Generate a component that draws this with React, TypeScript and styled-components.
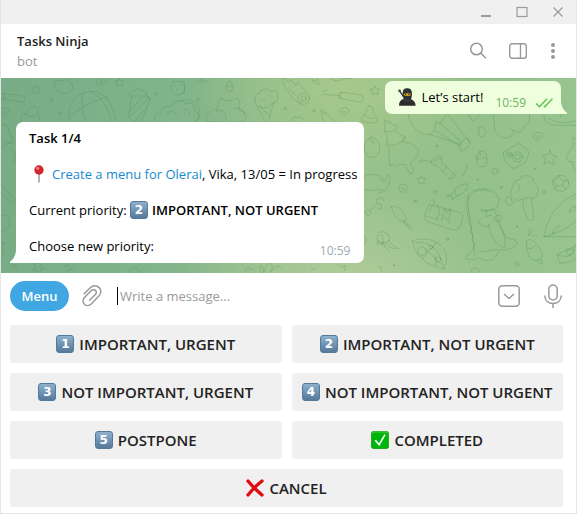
import React from "react";
import styled, { createGlobalStyle } from "styled-components";

const GlobalStyle = createGlobalStyle`
  * { box-sizing: border-box; }
  body {
    margin: 0;
    background: #fff;
    color: #000;
    font: 13px/18px "Open Sans", "Noto Sans", sans-serif;
  }
  button, input { font: inherit; }
`;

const Window = styled.div`
  min-height: 100vh;
  display: flex;
  flex-direction: column;
  border: 1px solid #e3e4e4;
  border-top: 0;
  background: #fff;
`;

const TitleBar = styled.div`
  height: 24px;
  display: flex;
  justify-content: flex-end;
  background: #f0f0f0;
`;

const WindowButton = styled.button`
  width: 36px;
  height: 24px;
  padding: 0;
  border: 0;
  background: none;
  color: #9b9b9b;
  display: grid;
  place-items: center;
`;

const Header = styled.header`
  height: 54px;
  padding: 0 16px;
  display: flex;
  align-items: center;
  justify-content: space-between;
`;

const ChatName = styled.h1`
  margin: 0;
  font-size: 13px;
  line-height: 20px;
  font-weight: 600;
  color: #222;
`;

const ChatStatus = styled.p`
  margin: 0;
  line-height: 20px;
  color: #999;
`;

const HeaderActions = styled.div`
  display: flex;
  gap: 16px;
`;

const IconButton = styled.button<{ $width?: number }>`
  width: ${({ $width = 24 }) => $width}px;
  height: 24px;
  padding: 0;
  border: 0;
  background: none;
  color: #999;
  display: grid;
  place-items: center;
  flex: none;
`;

const Chat = styled.main`
  position: relative;
  flex: 1;
  min-height: 195px;
  padding: 3px 15px 10px;
  display: flex;
  flex-direction: column;
  gap: 8px;
  overflow: hidden;
  background:
    radial-gradient(ellipse at 60% 6%, #a6c88c 0, rgba(166, 200, 140, 0) 30%),
    radial-gradient(ellipse at 60% 105%, #aecb98 0, rgba(174, 203, 152, 0) 34%),
    linear-gradient(95deg, #78ac86 0%, #82b48a 30%, #99c28c 60%, #93c08b 80%, #98c490 100%);
`;

const Wallpaper = styled.svg`
  position: absolute;
  inset: 0;
  width: 100%;
  height: 100%;
  fill: none;
  stroke: #3f7a4b;
  stroke-opacity: 0.24;
  stroke-width: 3;
  stroke-linecap: round;
  stroke-linejoin: round;
`;

const Bubble = styled.article<{ $own?: boolean }>`
  position: relative;
  align-self: ${({ $own }) => ($own ? "flex-end" : "flex-start")};
  padding: ${({ $own }) => ($own ? "7px 8px 8px 13px" : "7px 7px 8px 13px")};
  border-radius: ${({ $own }) => ($own ? "7px 7px 0 7px" : "7px 7px 7px 0")};
  background: ${({ $own }) => ($own ? "#effedd" : "#fff")};
  display: flex;
  align-items: center;
`;

const Tail = styled.svg<{ $own?: boolean }>`
  position: absolute;
  bottom: 0;
  ${({ $own }) => ($own ? "left: 100%;" : "right: 100%; transform: scaleX(-1);")}
  fill: ${({ $own }) => ($own ? "#effedd" : "#fff")};
`;

const MessageText = styled.p`
  margin: 0 0 18px;
  &:last-of-type { margin-bottom: 0; }
`;

const MessageBody = styled.div``;

const Strong = styled.strong`
  font-weight: 600;
`;

const TaskLink = styled.a`
  color: #168acd;
  text-decoration: none;
`;

const Time = styled.time`
  font-size: 12px;
  line-height: 12px;
  color: #a0acb6;
  position: absolute;
  right: 14px;
  bottom: 6px;
`;

const OwnMeta = styled.span`
  align-self: flex-end;
  margin: 0 0 -3px 12px;
  display: flex;
  align-items: center;
  gap: 9px;
  color: #6cb465;
  font-size: 12px;
  line-height: 12px;
`;

const EmojiSvg = styled.svg`
  width: 18px;
  height: 18px;
  margin-right: 5px;
  flex: none;
  vertical-align: -4px;
`;

const Keycap = styled.span<{ $inline?: boolean }>`
  width: 18px;
  height: 18px;
  margin-right: ${({ $inline }) => ($inline ? 4 : 5)}px;
  display: inline-grid;
  place-items: center;
  flex: none;
  vertical-align: bottom;
  border: 1px solid #55799a;
  border-radius: 3px;
  background: linear-gradient(#8db0cd, #55799b);
  color: #fff;
  font: 700 12px/16px "DejaVu Sans", sans-serif;
`;

const Composer = styled.form`
  height: 52px;
  padding: 0 11px 6px 9px;
  display: flex;
  align-items: center;
`;

const MenuButton = styled.button`
  width: 59px;
  height: 30px;
  padding: 0;
  border: 0;
  border-radius: 15px;
  background: #40a7e3;
  color: #fff;
  font-weight: 600;
  flex: none;
`;

const Attach = styled(IconButton)`
  margin: 0 13px 0 11px;
`;

const Caret = styled.span`
  width: 1px;
  height: 18px;
  background: #000;
  flex: none;
  margin-right: 2px;
`;

const MessageInput = styled.input`
  flex: 1;
  min-width: 0;
  padding: 0;
  border: 0;
  outline: 0;
  background: none;
  color: #000;
  &::placeholder { color: #999; opacity: 1; }
`;

const ComposerActions = styled.div`
  display: flex;
  gap: 20px;
`;

const Keyboard = styled.div`
  padding: 0 13px 6px 9px;
  display: grid;
  grid-template-columns: 1fr 1fr;
  gap: 10px;
`;

const KeyButton = styled.button<{ $wide?: boolean }>`
  height: 38px;
  padding: 0;
  border: 0;
  border-radius: 3px;
  background: #f0f0f0;
  color: #222;
  font-size: 15px;
  font-weight: 600;
  white-space: nowrap;
  display: flex;
  align-items: center;
  justify-content: center;
  ${({ $wide }) => $wide && "grid-column: 1 / -1;"}
`;

const NinjaEmoji = () => (
  <EmojiSvg viewBox="0 0 54 54" aria-label="Ninja" role="img">
    <path d="M2 5l16 23" stroke="#333638" strokeWidth="4" />
    <path d="M1 12l8-6" stroke="#333638" strokeWidth="3" />
    <path d="M3 53c0-12 5-18 14-21h18c11 3 17 9 18 21z" fill="#2b2d2f" />
    <path d="M14 16C14 5 19 1 28 1s14 5 14 16c0 9-2 15-5 19H19c-3-5-5-11-5-20z" fill="#303335" />
    <path d="M18 17q10-3 20 0v5q-10 3-20 0z" fill="#f0b51d" />
    <path d="M21 19h4m6 0h4" stroke="#1f2020" strokeWidth="3" />
    <path d="M15 35q13 8 26 0" stroke="#4b4e50" strokeWidth="2" fill="none" />
  </EmojiSvg>
);

const PinEmoji = () => (
  <EmojiSvg viewBox="0 0 54 54" aria-label="Pin" role="img">
    <path d="M30 24v27" stroke="#8b8e92" strokeWidth="4" strokeLinecap="round" />
    <circle cx="30" cy="15" r="14" fill="#d3262c" />
    <circle cx="26" cy="10" r="5" fill="#f47772" />
  </EmojiSvg>
);

const CheckEmoji = () => (
  <EmojiSvg viewBox="0 0 54 54" aria-hidden="true">
    <rect x="1" y="1" width="52" height="52" rx="8" fill="#00b50a" stroke="#078e10" strokeWidth="2" />
    <path d="M4 8q0-5 5-5h36q5 0 5 5" stroke="#6ddc68" strokeWidth="2" fill="none" />
    <path d="M11 29l4-3 9 11L40 10l4 2-19 33z" fill="#fff" />
  </EmojiSvg>
);

const CrossEmoji = () => (
  <EmojiSvg viewBox="0 0 54 54" aria-hidden="true">
    <path d="M6 6q14 18 42 42M48 6Q27 22 6 48" stroke="#e30b12" strokeWidth="10" strokeLinecap="round" fill="none" />
  </EmojiSvg>
);

const BubbleTail = ({ own }: { own?: boolean }) => (
  <Tail $own={own} width="6" height="12" viewBox="0 0 6 12" aria-hidden="true">
    <path d="M0 0v12h6q1-1-1-2Q1 7 0 0z" />
  </Tail>
);

const STAR = "M0-13l4 8 10 1-7 7 2 10-9-5-8 5 1-10-8-7 10-1z";
const SWIRL = "M0 3c-6 0-4-8 2-7 9 2 7 14-2 14-14 0-17-20-3-24 12-3 20 5 18 15";
const EGG = "M0-18c5 0 11 12 10 20S5 14 0 14-11 10-10 2-5-18 0-18z";

type Spot = [number, number];

const Scatter = ({ d, spots }: { d: string; spots: Spot[] }) => (
  <>
    {spots.map(([x, y]) => (
      <path key={`${x}-${y}`} d={d} transform={`translate(${x} ${y})`} />
    ))}
  </>
);

const Doodles = () => (
  <Wallpaper viewBox="0 0 577 195" preserveAspectRatio="xMinYMin slice" aria-hidden="true">
    <g transform="translate(0 -78) scale(.33333)">
      <path d="M162 247c8-12 20-2 26-6 14-6 28 6 26 22-2 14-14 18-28 17-16-2-30-17-24-33z" />
      <path d="M3 279l62 9q8 2 6 10-1 9-9 8L2 297M8 279v18" />
      <path d="M205 364c-10-52 22-88 66-90 40 2 66 34 72 90M246 280c-8 30 0 60 10 84M322 292c-40 6-86 32-114 56M270 275c36 20 56 56 60 89" />
      <path d="M382 350l10-62h46l10 10-28 68h-20zM388 332l36-40M388 350l54-54M404 362l32-38M390 288c-10-10 2-18 10-14 2-10 20-10 22-2 10-2 18 6 14 16 8 0 12 6 10 12" />
      <path d="M514 248c8-8 14-2 20-4 14 0 22 14 16 28-6 12-18 16-28 10-12-8-16-20-8-34M522 256v1M536 254v1M526 268q8 2 10-5" />
      <path d="M462 364c-6-14 4-28 18-24-2-16 14-26 28-18 4-18 34-26 46-12 18-6 34 10 26 24 16 2 16 22 6 30M498 340c12-10 24-6 28 6M546 330c14-6 22 6 20 14" />
      <path d="M60 364c-4-16 6-22 14-22 2-14 16-24 26-22 12 4 12 14 10 22 8 4 6 16 0 22M72 344q20 12 38-2" />
      <Scatter d={STAR} spots={[[104, 268], [355, 247]]} />
      <Scatter d={SWIRL} spots={[[298, 247], [10, 338]]} />
      <path d="M150 297l6 2-2 6-5-1zM116 320v4M176 336l6 2-2 6-5-1zM464 278l6 2-2 6-5-1z" />
    </g>
    <g transform="translate(0 32) scale(.33333)">
      <path d="M0 42c14 0 26 10 24 24-2 8 12 10 10 24-4 10-16 10-20 4M26 116c10 0 20 12 16 22M4 112q22-20 36-12M40 138v20q-4 8-8 0" />
      <path d="M-4 222l44 46q6 10-4 12L-6 242M0 316c18-6 30 8 26 26q-4 18-24 22M6 398v40M4 402q6-14 10 0" />
    </g>
    <g transform="translate(180 -8) scale(.33333)">
      <path d="M0 32q12 2 10 12v26H0M0 92c40-12 60 16 54 40 4 10-4 18-10 20M48 36l12-8 4 12 8-10 4 8 10-10" />
      <Scatter d={EGG} spots={[[145, 51]]} />
      <path d="M134 50l6-4 6 5 8-6" />
      <path d="M114 92l6-8 14 8h22l14-8 6 10-2 26q12 2 20 10 6 14-8 26H80c-12-14 0-34 28-38zM106 124c20-12 34 6 28 28M160 116c14-6 28 4 30 18" />
      <path d="M222 92c-6-14 6-22 14-20 0-18 30-18 34-6 12-10 24 4 20 14 2 12-6 20-18 20-4 12-24 20-36 8-10 2-14-8-14-16zM228 108l24 46M278 98l-16 56M238 112l28 24M264 74l6 6M242 90l8 4" />
      <circle cx="368" cy="86" r="17" />
      <circle cx="368" cy="86" r="8" />
      <path d="M304 24c0 20 12 26 10 34q14 10 18 26 12 8 26 18M310 24l14 12 6-8 14 20 6-12 30 34M324 58l24 20" />
      <path d="M392 26q6 14 20 16M396 34l16-6 2 14M452 26q18 14 34 0 16-2 28 0" />
      <path d="M482 67l60 8q10 12 0 22l-66-12q-8-10 6-18zM480 68q-10 10 2 17M470 76l-14-2-12 4q-4-6-16-6M426 64l12-4" />
      <Scatter d={STAR} spots={[[582, 62]]} />
      <Scatter d={SWIRL} spots={[[488, 127]]} />
      <path d="M418 120l10 36M420 118q20 14 44 38M426 128l8 4M566 108c8 0 12 8 12 22l10 12q4 12-6 16-20 4-38-4-6-10 2-16l10-12c0-10 4-18 10-18zM550 136q18 14 34 8M330 152q2-12 16-10 20-4 24 10" />
      <path d="M50 86l5 2-2 6-5-2zM312 112l5 2-2 6-5-2zM398 118l5 2-2 6-5-2z" />
    </g>
    <g transform="translate(180 32) scale(.33333)">
      <Scatter d="M0-30c14 0 26 18 24 38-2 16-14 24-24 22-14 0-24-14-22-30C-20-16-12-30 0-30z" spots={[[572, 112]]} />
      <path d="M562 90c10-6 18 4 14 14M546 214c0-18 20-26 36-18 14-4 26 6 26 16M546 240h60M550 308c4-12 14-8 16-4l22-24c-6-8 2-18 8-12 2-10 16-4 12 4M550 308c8-2 10 4 8 10 8 0 12-8 10-12M542 376h10q6 14 0 28h-10M590 376q14-6 16 8v18h-16z" />
      <path d="M194 484c0-14 12-14 14-4 12-6 14 2 10 8M240 488c-8-12-4-22 2-20q8 8 6 20 14-40 24-24 6 6-6 24 24-32 34-14M470 464l12 8 12-6-4 16M390 478h12" />
    </g>
    <g transform="translate(377 32) scale(.33333)">
      <path d="M20 31c10 8 16 2 24 14l14 2q0 10-8 14 16 14 32 20-2 10-10 14l24 4q10 8 24 16c4 20-8 38-24 44l10 22q0 14-12 8l-14-26q-18-2-24 6-10-10-20 0-6-22-2-56-14-8-8-12 4-16 0-30-10-2-4-40zM28 101q26 18 54-20M20 64q20 4 30-4" />
      <path d="M90 10c6 42 32 66 66 64l94 30M208 10l68 88M156 74l14-14 4-26 12 6 22-30M170 60l76 48M186 40l66 58M242 106q14-16 26-24l10 20q-12 14-26 22zM270 10l16 26 22-26" />
      <path d="M348 12c-6 18 2 20 2 28-6 28 14 46 38 44 14-4 20-16 20-22 16 12 30 0 28-14 14-2 22-16 18-36M408 62q-12-2-14-10M498 10c-2 20 8 34 36 36h62M510 24q34 24 86 8M548 10v12" />
      <path d="M300 54q6 12 2 24 10 8 20-4 6-12-4-20-8-10-18 0zM376 128l46-28 28 20 2 12-8 24-36 20-24-18q-8-14-8-30z" />
      <circle cx="419" cy="141" r="15" /><circle cx="419" cy="141" r="8" /><circle cx="394" cy="135" r="9" /><circle cx="394" cy="135" r="4" />
      <path d="M160 158c0-16 24-24 32-16l-2 16 42 38q-2 10-16 12l-40-42q-14 2-16-8zM168 158q6-14 24-12M192 184l16-16M214 206l16-16M266 162q4 20-16 40M132 150l26 4" />
      <path d="M296 144c0-28 28-26 30-4 2 24-6 30-14 30-14 0-18-12-16-26zM296 144l8 6 8-8 14 6M306 122v16" />
      <Scatter d={STAR} spots={[[130, 210]]} />
      <path d="M516 120l6 16 15 2-12 10 2 17-14-10-16 8 5-16-9-12 17-2z" />
      <Scatter d={SWIRL} spots={[[75, 237], [479, 82]]} />
      <path d="M0 250c28-4 40-28 32-58-12 12-6 22-16 26L0 202M600 90q-22-14-14 0v20q-30 30-16 44l14 2q0 22 16 30" />
      <path d="M224 250c4-14 24-30 46-28-2 20-16 30-34 36l-12 12-2-10-14-2zM262 238v1M236 258q-8-10-6-18" />
      <path d="M40 290c20-4 34 10 40 26 8 12 4 18-2 18-20-4-32-18-38-44zM76 334l28 28M80 330l20 20M70 330l24 26M0 368c24-10 38 8 34 24-6 10-20 6-34 2M12 396l22 30M20 396q20 24 32 20M30 390q16 24 36 26M0 390l20 22" />
      <path d="M154 284l92 24q10 6 8 18l-10 28q-8 8-20 6l-74-24q-16-8-10-20l8-22q2-12 6-10zM158 270q14-6 12 12M178 284q10 16 6 28l-12 22M142 318l40 10M200 296l-10 36 12-10 10 16 6-44-10 12zM154 304l10-20" />
      <path d="M104 392c44-16 104 6 102 56l-8 30-38-14q-18-6-28-20-26-16-28-52zM112 398q72-8 84 78M176 396l-42 50M142 416l46 46M170 436l6 32" />
      <circle cx="132" cy="424" r="13" /><circle cx="158" cy="412" r="6" /><circle cx="180" cy="448" r="8" />
      <path d="M272 300c-6-32 2-54 26-58 30-8 60 2 64 26 2 14-4 26-14 32 14 24 22 62 36 82 12 8 26 2 34 16-8 22-34 20-54 22-10 20-18 32-30 30-14 4-22-2-30-8-6 8-38 10-40 0 0-12 22-14 24-24-2-38-12-84-16-118zM308 298q22 10 40-4M310 303q20 2 36-4M346 260v1M322 270v2M326 306l-2 14 16-4M300 330c4 20 28 24 38 12M348 324c10-14 26-8 22 2-6 12-20 6-22-2zM332 344c4 36 24 64 48 68 8-34-16-70-28-82M304 426q28-4 56-8" />
      <path d="M274 250l-6 10 2 8-6 8 4 10-4 10 6 10-2 12 6 10-2 12 8 10-2 14 6 12-2 14 8 12-4 14 6 12-6 10M284 244l6-6 6 4 8-6 6 4 10-6 10 6" />
      <path d="M402 266q-8-20 2-34-2-20 22-24 4-14 24-10 16-2 16 18 18 14 14 30-4 22-20 18l8 60q-4 14-20 4-14-30-14-62-10 10-20 2-8 14-18 18-20-4-10-24 12-4 16 10" />
      <path d="M434 268q16-8 26-4M414 218q18 8 6 28" />
      <circle cx="548" cy="220" r="24" />
      <path d="M526 212l16-10 16 10-4 14-18 2zM542 202v-6M558 212h12M554 226l8 12M536 228l-6 10M498 380c6-60 54-118 104-130M498 380h104M498 380q70-14 104-58M524 370q-6-14 20-24-4 16-20 24zM574 306q0-14 18-18 4 14-18 18zM582 270l10-10" />
      <path d="M446 396c4-16 24-4 38 18 14 18 8 30 2 34-18 8-26 2-34-14-6-14-8-24-6-38zM452 416q14 2 20-10M476 450l8 10q10 4 8-4l-4-10M452 376c-6-14 10-26 8-14q2 10-8 14zM464 376h10M538 434l72-34M538 434l8 26q34-2 60-22M540 436q28 8 46-4l4-28M568 428c-8-14 4-16 8-6 6-10 16-4 8 6l-10 8zM280 488q-2-14 12-14 10 0 12 14M0 470l10 2-2 12M0 280q14 4 12 12-4 6-12 4" />
      <circle cx="351" cy="184" r="9" /><circle cx="171" cy="246" r="5" /><circle cx="498" cy="246" r="5" /><circle cx="416" cy="463" r="6" /><circle cx="208" cy="387" r="4" /><circle cx="370" cy="232" r="3" /><circle cx="112" cy="273" r="3" /><circle cx="176" cy="108" r="3" /><circle cx="126" cy="155" r="2" /><circle cx="470" cy="177" r="2" /><circle cx="299" cy="209" r="2" /><circle cx="417" cy="350" r="2" /><circle cx="48" cy="466" r="2" />
    </g>
    <g transform="translate(0 182) scale(.33333)">
      <path d="M36 30q-4-16 4-14 4-4 6 14M120 10l-4 12 14 4-12 6-4 10-6-10-14-2 10-10-2-10zM190 20q8-10 18 0M198 36q4-14 20-8M384 38c0-10 6-14 16-14s14 4 16 14" />
    </g>
  </Wallpaper>
);

const keys: { label: string; digit?: string; icon?: React.ReactNode; wide?: boolean }[] = [
  { digit: "1", label: "IMPORTANT, URGENT" },
  { digit: "2", label: "IMPORTANT, NOT URGENT" },
  { digit: "3", label: "NOT IMPORTANT, URGENT" },
  { digit: "4", label: "NOT IMPORTANT, NOT URGENT" },
  { digit: "5", label: "POSTPONE" },
  { icon: <CheckEmoji />, label: "COMPLETED" },
  { icon: <CrossEmoji />, label: "CANCEL", wide: true },
];

export default function App() {
  return (
    <Window>
      <GlobalStyle />
      <TitleBar>
        <WindowButton aria-label="Minimize">
          <svg width="12" height="12" fill="none" stroke="currentColor"><path d="M1 10h10" strokeWidth="2" /></svg>
        </WindowButton>
        <WindowButton aria-label="Maximize">
          <svg width="12" height="12" fill="none" stroke="currentColor"><rect x="1" y="1.5" width="10" height="9" strokeWidth="1.2" /></svg>
        </WindowButton>
        <WindowButton aria-label="Close">
          <svg width="12" height="12" fill="none" stroke="currentColor"><path d="M1.5 1.5l9 9m0-9l-9 9" strokeWidth="1.2" /></svg>
        </WindowButton>
      </TitleBar>

      <Header>
        <div>
          <ChatName>Tasks Ninja</ChatName>
          <ChatStatus>bot</ChatStatus>
        </div>
        <HeaderActions>
          <IconButton aria-label="Search">
            <svg width="20" height="20" fill="none" stroke="currentColor" strokeWidth="1.5" strokeLinecap="round">
              <circle cx="8.5" cy="8" r="5.8" /><path d="M12.8 12.3l4.7 4.5" />
            </svg>
          </IconButton>
          <IconButton aria-label="Show info panel">
            <svg width="20" height="18" fill="none" stroke="currentColor" strokeWidth="1.4">
              <rect x="1.7" y="1.7" width="16.6" height="14.6" rx="2.5" /><path d="M12.5 2v14" />
            </svg>
          </IconButton>
          <IconButton $width={14} aria-label="More options">
            <svg width="6" height="18" fill="currentColor">
              <circle cx="3" cy="3" r="2" /><circle cx="3" cy="9" r="2" /><circle cx="3" cy="15" r="2" />
            </svg>
          </IconButton>
        </HeaderActions>
      </Header>

      <Chat>
        <Doodles />
        <Bubble $own>
          <NinjaEmoji />
          <MessageText>Let’s start!</MessageText>
          <OwnMeta>
            <time>10:59</time>
            <svg width="18" height="10" fill="none" stroke="#5dc452" strokeWidth="1.5" aria-label="Read" role="img">
              <path d="M1 5.5l3.5 3.3L12 .8M8.8 8l1 .8L17.4.8" />
            </svg>
          </OwnMeta>
          <BubbleTail own />
        </Bubble>
        <Bubble>
          <MessageBody>
            <MessageText><Strong>Task 1/4</Strong></MessageText>
            <MessageText>
              <PinEmoji />
              <TaskLink href="#task">Create a menu for Olerai</TaskLink>, Vika, 13/05 = In progress
            </MessageText>
            <MessageText>
              Current priority: <Keycap $inline>2</Keycap><Strong>IMPORTANT, NOT URGENT</Strong>
            </MessageText>
            <MessageText>Choose new priority:</MessageText>
          </MessageBody>
          <Time>10:59</Time>
          <BubbleTail />
        </Bubble>
      </Chat>

      <Composer onSubmit={(e) => e.preventDefault()}>
        <MenuButton type="button">Menu</MenuButton>
        <Attach type="button" aria-label="Attach file">
          <svg width="22" height="24" viewBox="0 0 22 24" fill="none" stroke="currentColor" strokeWidth="1.5" strokeLinecap="round" strokeLinejoin="round">
            <path d="M3.2 9.800L9 4c3-3 7-2.600 9.200-.4s2.200 5.800-.4 8.400l-7.600 8c-2 2-5 2-6.800.2s-1.800-4.600.1-6.600l6.800-7c1.200-1.200 3.100-1.300 4.200-.2s1 2.900-.2 4.100l-5.600 5.800" />
          </svg>
        </Attach>
        <Caret />
        <MessageInput type="text" aria-label="Message" placeholder="Write a message..." />
        <ComposerActions>
          <IconButton type="button" aria-label="Hide bot keyboard">
            <svg width="22" height="22" fill="none" stroke="currentColor" strokeWidth="1.5" strokeLinejoin="round">
              <rect x="0.800" y="0.800" width="20.400" height="20.400" rx="3.500" /><path d="M6 9l5 4.500L16 9" />
            </svg>
          </IconButton>
          <IconButton type="button" aria-label="Record voice message">
            <svg width="20" height="24" fill="none" stroke="currentColor" strokeWidth="1.5">
              <rect x="5.800" y="1" width="8.400" height="15" rx="4.200" />
              <path d="M1.700 11.500c.3 5 3.700 8 8.300 8s8-3 8.300-8M10 19.500V24" />
            </svg>
          </IconButton>
        </ComposerActions>
      </Composer>

      <Keyboard>
        {keys.map(({ label, digit, icon, wide }) => (
          <KeyButton key={label} type="button" $wide={wide}>
            {digit ? <Keycap>{digit}</Keycap> : icon}
            {label}
          </KeyButton>
        ))}
      </Keyboard>
    </Window>
  );
}
